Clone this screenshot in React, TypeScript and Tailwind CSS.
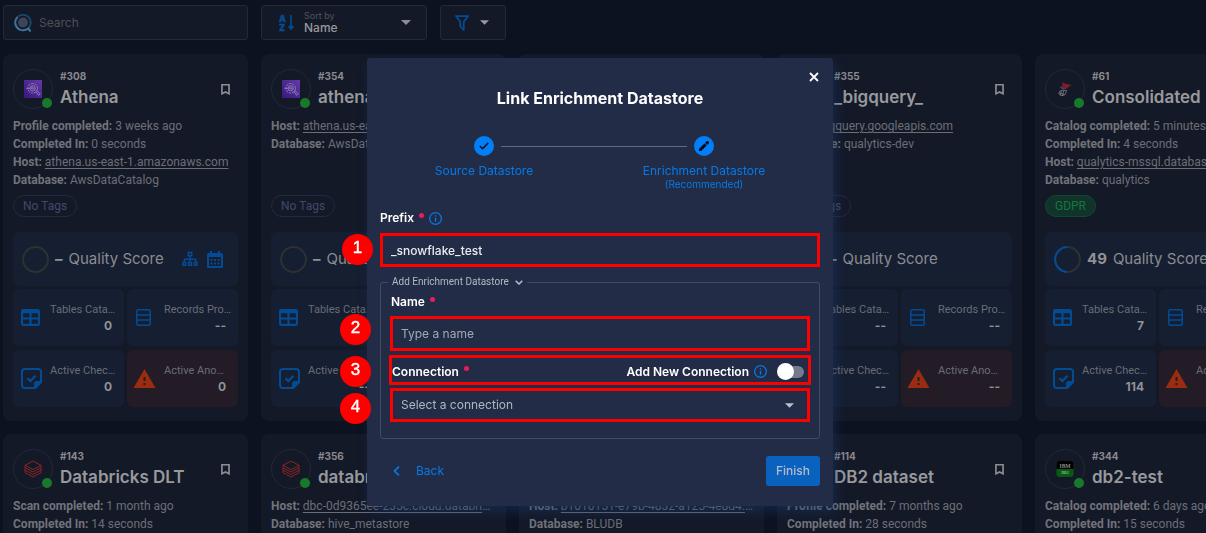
import type { ReactNode } from "react";

type Kind = "athena" | "databricks" | "mssql" | "db2" | "bigquery";

type Store = {
  id: number;
  name: string;
  kind: Kind;
  lines: { label: string; value: string; link?: boolean }[];
  tag?: string;
  score?: number;
  actions?: boolean;
  tables?: string;
  checks?: string;
  anomalies?: string;
};

const stores: Store[] = [
  {
    id: 308,
    name: "Athena",
    kind: "athena",
    lines: [
      { label: "Profile completed:", value: "3 weeks ago" },
      { label: "Completed In:", value: "0 seconds" },
      { label: "Host:", value: "athena.us-east-1.amazonaws.com", link: true },
      { label: "Database:", value: "AwsDataCatalog" },
    ],
    actions: true,
    tables: "0",
    checks: "0",
    anomalies: "0",
  },
  {
    id: 354,
    name: "athena",
    kind: "athena",
    lines: [
      { label: "Host:", value: "athena.us-east-1.amazonaws.com", link: true },
      { label: "Database:", value: "AwsDataCatalog" },
    ],
  },
  {
    id: 355,
    name: "bigquery",
    kind: "bigquery",
    lines: [{ label: "Database:", value: "qualytics" }],
  },
  {
    id: 355,
    name: "_bigquery_",
    kind: "bigquery",
    lines: [
      { label: "Host:", value: "bigquery.googleapis.com", link: true },
      { label: "Database:", value: "qualytics-dev" },
    ],
  },
  {
    id: 61,
    name: "Consolidated",
    kind: "mssql",
    lines: [
      { label: "Catalog completed:", value: "5 minutes ago" },
      { label: "Completed In:", value: "4 seconds" },
      { label: "Host:", value: "qualytics-mssql.database.windows.net", link: true },
      { label: "Database:", value: "qualytics" },
    ],
    tag: "GDPR",
    score: 49,
    tables: "7",
    checks: "114",
  },
  {
    id: 143,
    name: "Databricks DLT",
    kind: "databricks",
    lines: [
      { label: "Scan completed:", value: "1 month ago" },
      { label: "Completed In:", value: "14 seconds" },
    ],
  },
  {
    id: 356,
    name: "databricks",
    kind: "databricks",
    lines: [
      { label: "Host:", value: "dbc-0d9365ee-235c.cloud.databricks.com", link: true },
      { label: "Database:", value: "hive_metastore" },
    ],
  },
  {
    id: 113,
    name: "DB2",
    kind: "db2",
    lines: [
      { label: "Host:", value: "b1010151-e79b-4832-a125-4e8d4.databases.cloud", link: true },
      { label: "Database:", value: "BLUDB" },
    ],
  },
  {
    id: 114,
    name: "DB2 dataset",
    kind: "db2",
    lines: [
      { label: "Profile completed:", value: "7 months ago" },
      { label: "Completed In:", value: "28 seconds" },
    ],
  },
  {
    id: 344,
    name: "db2-test",
    kind: "db2",
    lines: [
      { label: "Catalog completed:", value: "6 days ago" },
      { label: "Completed In:", value: "15 seconds" },
    ],
  },
];

function Caret({ className }: { className: string }) {
  return (
    <svg viewBox="7 10 10 5" className={className} fill="currentColor" aria-hidden="true">
      <path d="M7 10l5 5 5-5z" />
    </svg>
  );
}

function InfoIcon() {
  return (
    <svg viewBox="2 2 20 20" className="size-[13px] shrink-0 text-[#067ae6]" fill="currentColor" aria-hidden="true">
      <path d="M11,9H13V7H11M12,20C7.59,20 4,16.41 4,12C4,7.59 7.59,4 12,4C16.41,4 20,7.59 20,12C20,16.41 16.41,20 12,20M12,2A10,10 0 0,0 2,12A10,10 0 0,0 12,22A10,10 0 0,0 22,12A10,10 0 0,0 12,2M11,17H13V11H11V17Z" />
    </svg>
  );
}

function KindLogo({ kind }: { kind: Kind }) {
  if (kind === "athena") {
    return (
      <svg viewBox="0 0 18 18" className="size-[18px]" fill="none" aria-hidden="true">
        <defs>
          <linearGradient id="violet" x1="0" y1="18" x2="18" y2="0" gradientUnits="userSpaceOnUse">
            <stop stopColor="#35197a" />
            <stop offset="1" stopColor="#643aa6" />
          </linearGradient>
        </defs>
        <path fill="url(#violet)" d="M0 0h18v18H0z" />
        <g stroke="#9e8bc4" strokeWidth=".8">
          <circle cx="8.7" cy="8.3" r="4.8" strokeDasharray="2.6 .8" />
          <circle cx="8.7" cy="8.3" r="2.6" />
          <path d="M2.3 8.3h4M7.5 8.8V7.4M8.8 9.4V6.8M10 9.4V7.8M12 11.7l1-1 3 3-1.3 1.6z" />
        </g>
      </svg>
    );
  }
  if (kind === "databricks") {
    return (
      <svg viewBox="0 0 18 18" className="size-[18px]" fill="none" stroke="#8a2424" strokeWidth="1" aria-hidden="true">
        <path d="M1 5.3 9 1l8 4.3-8 4.3z" />
        <path d="M1 5.3v2.4l8 4.3 8-4.3V5.3" />
        <path d="M1 7.8v2.4l8 4.3 8-4.3V7.8" />
        <path d="M1 10.2v2.4L9 17l8-4.4v-2.4" />
      </svg>
    );
  }
  if (kind === "mssql") {
    return (
      <svg viewBox="0 0 18 18" className="size-[18px]" fill="none" aria-hidden="true">
        <path fill="#7c1f2b" d="M5.500 1.500c1.500 1.400 3.400 2 5.500 2.600 2 .4 3.900 1.200 5 2-1.500-.3-2.700 0-3.500.8-1.200 1.200-2.500 2.300-4.500 2.300C7.500 7.500 6.500 6.500 5 6l2-1z" />
        <path stroke="#7f8087" strokeWidth=".8" d="M3.500 11.500c2-1.500 4.500-1.600 7-1-1 3-1 4.500-3 5C5.500 16 3 15 3 13.500zM3.500 13l5 1.500M5.500 10.500l-1 4.500M8 10.200 6.500 15.500M4.500 7.500 7.500 8.500" />
      </svg>
    );
  }
  if (kind === "db2") {
    return (
      <svg viewBox="0 0 18 18" className="size-[18px]" aria-hidden="true">
        <rect x=".5" y="1" width="17" height="16" rx="3" fill="#065a12" />
        <path d="M3.500 1h11a3 3 0 0 1 3 3v5H.5V4a3 3 0 0 1 3-3z" fill="#000" />
        <text x="9" y="7.500" textAnchor="middle" fontSize="5.500" fontWeight="700" fill="#8b8b8b" fontFamily="Liberation Serif">IBM</text>
        <text x="9" y="14" textAnchor="middle" fontSize="4" fontWeight="700" fill="#8fb393" fontFamily="Liberation Serif">DB2</text>
      </svg>
    );
  }
  return (
    <svg viewBox="0 0 18 18" className="size-[18px]" aria-hidden="true">
      <path d="M5 1h8l4 8-4 8H5L1 9z" fill="#27508f" />
    </svg>
  );
}

function Stat({ label, value, icon, alert }: { label: string; value: string; icon: ReactNode; alert?: boolean }) {
  return (
    <div className={`flex h-[57px] min-w-0 items-center rounded-md pr-3 pl-2 ${alert ? "bg-[#231b26]" : "bg-[#161e31]"}`}>
      <div className="flex w-6 shrink-0 justify-start text-[#034c94]">{icon}</div>
      <div className="flex min-w-0 flex-1 flex-col pl-[5px]">
        <span className="font-['Roboto',sans-serif] text-[11px] leading-4 whitespace-nowrap text-[#6a6c75]">{label}</span>
        <span className="text-right text-[12px] leading-4 font-bold text-[#909195]">{value}</span>
      </div>
    </div>
  );
}

function StoreCard({ store }: { store: Store }) {
  return (
    <article className="flex h-[367px] min-w-0 flex-col rounded-lg bg-[#141928] px-[10px] pt-[15px]">
      <div className="flex h-10 items-center gap-[7px]">
        <div className="relative flex size-10 shrink-0 items-center justify-center rounded-full border border-[#232838]">
          <KindLogo kind={store.kind} />
          <span className="absolute right-0 bottom-0 size-[10px] rounded-full bg-[#177a2b]" />
        </div>
        <div className="min-w-0 flex-1 pt-[2px]">
          <p className="text-[10px] leading-[14px] font-bold text-[#898a8e]">#{store.id}</p>
          <h2 className="truncate text-[17px] leading-7 font-semibold text-[#98999c]">{store.name}</h2>
        </div>
        <button type="button" aria-label="Bookmark" className="mr-2 text-[#8c8d92]">
          <svg viewBox="5 3 14 18" className="h-[11px] w-[9px]" fill="none" stroke="currentColor" strokeWidth="2.600" preserveAspectRatio="none">
            <path d="M6.500 4.300h11v14.700L12 16l-5.500 3z" />
          </svg>
        </button>
      </div>
      <div className="mt-2 flex h-[72px] flex-col font-['Roboto',sans-serif] text-[12px] leading-[18px] text-[#6c6e76]">
        {store.lines.map((l) => (
          <p key={l.label} className="truncate">
            <b className="font-bold text-[#71737a]">{l.label}</b>{" "}
            {l.link ? (
              <a href="#host" className="underline underline-offset-2">
                {l.value}
              </a>
            ) : (
              l.value
            )}
          </p>
        ))}
      </div>
      <div className="mt-[6px] flex">
        <span
          className={`flex h-[22px] items-center rounded-full border px-[9px] font-['Roboto',sans-serif] text-[12px] ${
            store.tag ? "border-[#0f4a2b] bg-[#12332b] text-[#107a37]" : "border-[#232a3d] text-[#3f4a6b]"
          }`}
        >
          {store.tag ?? "No Tags"}
        </span>
      </div>
      <div className="mt-[15px] flex h-[54px] items-center rounded-md bg-[#161e31] pr-[15px] pl-[9px]">
        <svg viewBox="0 0 27 27" className="size-[27px] shrink-0 -rotate-90" fill="none" strokeWidth="2" aria-hidden="true">
          <circle cx="13.500" cy="13.500" r="12.400" stroke="#2e3032" />
          {store.score ? (
            <circle cx="13.500" cy="13.500" r="12.400" stroke="#034c94" pathLength="100" strokeDasharray={`${store.score} 100`} transform="translate(0 27) scale(1 -1)" />
          ) : null}
        </svg>
        <span className="ml-[6px] text-[15px] font-bold text-[#909195]">{store.score ?? "–"}</span>
        <span className="ml-[6px] text-[15px] whitespace-nowrap text-[#8b8c90]">Quality Score</span>
        {store.actions ? (
          <div className="ml-auto flex items-center gap-[9px] text-[#034c94]">
            <svg viewBox="0 0 16 16" className="size-4" fill="none" stroke="currentColor" strokeWidth="1.500" aria-hidden="true">
              <path d="M6.300 1.500h3.400v3.200H6.300zM1 11.500h2.800v2.700H1zM6.600 11.500h2.800v2.700H6.600zM12.200 11.500H15v2.700h-2.800zM8 4.700v6.800M2.400 11.500V8.300h11.200v3.200" />
            </svg>
            <svg viewBox="0 0 16 17" className="h-[17px] w-4" aria-hidden="true">
              <path d="M3 0h2v2h6V0h2v2h1.500A1.500 1.500 0 0 1 16 3.500v12a1.500 1.500 0 0 1-1.500 1.500h-13A1.500 1.500 0 0 1 0 15.500v-12A1.500 1.500 0 0 1 1.500 2H3zM2 6v9h12V6z" fill="currentColor" fillRule="evenodd" />
              <path d="M3.500 8h2v2h-2zM7 8h2v2H7zM10.500 8h2v2h-2zM3.500 11.500h2v2h-2zM7 11.500h2v2H7zM10.500 11.500h2v2h-2z" fill="currentColor" />
            </svg>
          </div>
        ) : null}
      </div>
      <div className="mt-[3px] grid grid-cols-2 gap-x-[3px] gap-y-1">
        <Stat
          label="Tables Cata…"
          value={store.tables ?? "--"}
          icon={
            <svg viewBox="3 4 18 16" className="h-[17px] w-[19px]" fill="currentColor">
              <path d="M5,4H19A2,2 0 0,1 21,6V18A2,2 0 0,1 19,20H5A2,2 0 0,1 3,18V6A2,2 0 0,1 5,4M5,8V12H11V8H5M13,8V12H19V8H13M5,14V18H11V14H5M13,14V18H19V14H13Z" />
            </svg>
          }
        />
        <Stat
          label="Records Pro…"
          value="--"
          icon={
            <svg viewBox="0 0 15 17" className="ml-px h-[17px] w-[15px]" fill="none" stroke="currentColor" strokeWidth="1.500">
              <rect x=".8" y=".8" width="13.400" height="15.400" rx="1.500" />
              <path d="M1 6h13M1 11h13" />
            </svg>
          }
        />
        <Stat
          label="Active Chec…"
          value={store.checks ?? "--"}
          icon={
            <svg viewBox="0 0 21 21" className="size-[21px]" fill="none" stroke="currentColor" strokeWidth="2">
              <path d="M20 14V4a3 3 0 0 0-3-3H4a3 3 0 0 0-3 3v13a3 3 0 0 0 3 3h10z" />
              <path d="M14 20v-4a2 2 0 0 1 2-2h4z" fill="currentColor" />
              <path d="m6.500 10.300 2.800 2.800 5.200-5.400" strokeWidth="2.200" />
            </svg>
          }
        />
        <Stat
          alert
          label="Active Ano…"
          value={store.anomalies ?? "--"}
          icon={
            <svg viewBox="1 2 22 19" className="-ml-[2px] h-[19px] w-[23px] text-[#9a2c10]" fill="currentColor">
              <path d="M13,14H11V10H13M13,18H11V16H13M1,21H23L12,2L1,21Z" />
            </svg>
          }
        />
      </div>
    </article>
  );
}

function Badge({ n, className }: { n: number; className: string }) {
  return (
    <span
      className={`absolute flex size-[31px] items-center justify-center rounded-full bg-[#fe0000] pb-1 font-['Liberation_Sans',sans-serif] text-[17px] leading-none text-white [-webkit-text-stroke:0.4px_white] ${className}`}
    >
      {n}
    </span>
  );
}

function Required() {
  return <span className="mb-[6px] size-[5px] rounded-full bg-[#ec1b5d]" />;
}

function EnrichmentDialog() {
  return (
    <div className="fixed inset-0 flex items-start justify-center pt-[58px] pr-[6px]">
      <form
        role="dialog"
        aria-labelledby="dialog-title"
        className="relative flex w-[466px] flex-col rounded-[3px] bg-[#232c46] px-[13px] pb-5 shadow-[3px_6px_12px_rgba(24,60,110,0.45)]"
      >
        <button type="button" aria-label="Close" className="absolute top-[14px] right-[14px] text-white">
          <svg viewBox="0 0 10 10" className="size-[10px]" fill="none" stroke="currentColor" strokeWidth="1.800">
            <path d="M1 1l8 8M9 1 1 9" />
          </svg>
        </button>
        <h1 id="dialog-title" className="mt-7 text-center text-[16px] leading-6 font-bold text-white">
          Link Enrichment Datastore
        </h1>
        <ol className="mt-[26px] flex w-[328px] self-center text-[12px] leading-[14px] whitespace-nowrap text-[#067ae6]">
          <li className="flex w-24 flex-col items-center">
            <span className="mb-2 flex size-5 items-center justify-center rounded-full bg-[#017ff8]">
              <svg viewBox="0 0 10 8" className="h-2 w-[10px]" fill="none" stroke="#0a1020" strokeWidth="1.500">
                <path d="m.8 4 2.700 2.700L9.300.9" />
              </svg>
            </span>
            Source Datastore
          </li>
          <li aria-hidden="true" className="mt-[10px] -mr-[43px] -ml-[31px] h-px flex-1 bg-[#626a7e]" />
          <li className="flex w-[120px] flex-col items-center">
            <span className="mb-2 flex size-5 items-center justify-center rounded-full bg-[#017ff8]">
              <svg viewBox="3 3 18 18" className="size-[10px]" fill="#050a14">
                <path d="M3 17.200V21h3.800L16.600 11.200 12.800 7.400zM17.700 10.100 13.900 6.300 16.900 3.300a1.500 1.500 0 0 1 2.100 0l1.700 1.700a1.500 1.500 0 0 1 0 2.100z" />
              </svg>
            </span>
            Enrichment Datastore
            <span className="text-[10px] leading-3">(Recommended)</span>
          </li>
        </ol>

        <div className="mt-[18px] flex h-5 items-center gap-[5px]">
          <label htmlFor="prefix" className="text-[12px] font-semibold text-white">
            Prefix
          </label>
          <Required />
          <InfoIcon />
        </div>
        <div className="relative mt-[5px] flex">
          <input
            id="prefix"
            defaultValue="_snowflake_test"
            className="h-[34px] w-full border-[3px] border-[#fe0000] bg-transparent px-2 text-[12px] font-medium text-[#e9ebef] outline-none"
          />
          <Badge n={1} className="top-[1px] -left-[38px]" />
        </div>

        <fieldset className="mt-[7px] rounded-[3px] border border-[#434b61] px-[9px] pb-4">
          <legend className="-ml-[2px] px-1 font-['Roboto',sans-serif] text-[10px] leading-4 text-[#b4b8c2]">
            <button type="button" className="flex items-center gap-[6px]">
              Add Enrichment Datastore
              <svg viewBox="0 0 8 5" className="h-[5px] w-2" fill="none" stroke="currentColor" strokeWidth="1.600">
                <path d="m.7.700 3.300 3.300L7.300.7" />
              </svg>
            </button>
          </legend>
          <div className="mt-[2px] flex h-5 items-center gap-[5px] pl-px">
            <label htmlFor="name" className="text-[12px] font-semibold text-white">
              Name
            </label>
            <Required />
          </div>
          <div className="relative mt-1 flex">
            <input
              id="name"
              placeholder="Type a name"
              className="h-[35px] w-full border-[3px] border-[#fe0000] bg-transparent px-2 text-[12px] text-[#e9ebef] outline-none placeholder:text-[#a4a8b3]"
            />
            <Badge n={2} className="-top-[2px] -left-[50px]" />
          </div>
          <div className="relative -mx-px mt-1 flex h-[30px] items-center gap-[5px] border-[3px] border-[#fe0000] pt-[3px] pr-[3px]">
            <label htmlFor="connection" className="text-[12px] font-semibold text-white">
              Connection
            </label>
            <Required />
            <label htmlFor="new-connection" className="ml-auto text-[12px] font-semibold text-white">
              Add New Connection
            </label>
            <InfoIcon />
            <input
              id="new-connection"
              type="checkbox"
              role="switch"
              className="relative mr-px ml-[6px] h-3 w-[26px] appearance-none rounded-full bg-[#747b8b] before:absolute before:-top-[3px] before:-left-px before:size-[17px] before:rounded-full before:bg-white"
            />
            <Badge n={3} className="-top-[2px] -left-[52px]" />
          </div>
          <div className="relative mt-[3px] flex items-center">
            <select
              id="connection"
              className="h-[34px] w-full appearance-none border-[3px] border-[#fe0000] bg-transparent px-2 text-[12px] text-[#b2b6bf] outline-none"
            >
              <option>Select a connection</option>
            </select>
            <Caret className="pointer-events-none absolute right-4 h-[5px] w-[9px] text-[#bdc0c9]" />
            <Badge n={4} className="top-[5px] -left-[50px]" />
          </div>
        </fieldset>

        <div className="mt-[17px] flex items-center justify-between">
          <button type="button" className="flex items-center gap-4 pl-[13px] text-[12px] text-[#067ae6]">
            <svg viewBox="0 0 7 10" className="h-[10px] w-[7px]" fill="none" stroke="currentColor" strokeWidth="1.700">
              <path d="M6 .7 1.500 5 6 9.300" />
            </svg>
            Back
          </button>
          <button type="submit" className="h-[30px] rounded-[3px] bg-[#0a62bf] px-[10px] text-[12px] font-medium text-[#b4bccb]">
            Finish
          </button>
        </div>
      </form>
    </div>
  );
}

export default function App() {
  return (
    <div className="h-screen overflow-hidden bg-[#0c1220] px-[3px] pt-[5px] font-['Inter',sans-serif]">
      <div className="flex h-[35px] gap-[13px]">
        <label className="flex w-[245px] items-center gap-[6px] rounded-[3px] border border-[#242936] bg-[#141928] pl-[9px]">
          <svg viewBox="0 0 20 20" className="size-5" fill="none" aria-hidden="true">
            <circle cx="10" cy="9.500" r="5" fill="#3c4658" />
            <circle cx="10" cy="9.500" r="7.700" stroke="#17466a" strokeWidth="2" />
            <path d="M4.500 4.100A7.700 7.700 0 0 0 13 16.600l2.500-1 2 3" stroke="#3f7199" strokeWidth="2" />
          </svg>
          <input aria-label="Search" placeholder="Search" className="min-w-0 flex-1 bg-transparent text-[12px] text-[#898a8e] outline-none placeholder:text-[#4d4f57]" />
        </label>
        <button type="button" className="flex w-[166px] items-center rounded-[3px] border border-[#242936] bg-[#141928] pr-[15px] pl-[17px]">
          <svg viewBox="0 0 16 18" className="h-[18px] w-4 text-[#034c94]" aria-hidden="true">
            <text x="0" y="8" fontSize="9" fontWeight="800" fill="currentColor" stroke="currentColor" strokeWidth=".5" fontFamily="Inter">A</text>
            <text x="0" y="16.500" fontSize="9" fontWeight="800" fill="currentColor" stroke="currentColor" strokeWidth=".5" fontFamily="Inter">Z</text>
            <path d="M12 1v13.500M9.500 12l2.500 3 2.500-3" fill="none" stroke="currentColor" strokeWidth="1.600" />
          </svg>
          <span className="ml-[9px] flex flex-col text-left">
            <span className="text-[9px] leading-[11px] text-[#505259]">Sort by</span>
            <span className="text-[12px] leading-[14px] font-medium text-[#97989b]">Name</span>
          </span>
          <Caret className="ml-auto h-[5px] w-[10px] text-[#8c8d92]" />
        </button>
        <button type="button" aria-label="Filter" className="flex w-[66px] items-center justify-between rounded-[3px] border border-[#242936] bg-[#141928] pr-4 pl-[14px]">
          <svg viewBox="4 3 16 18" className="h-4 w-[14px] text-[#034c94]" fill="currentColor">
            <path d="M15,19.880C15.040,20.180 14.940,20.500 14.710,20.710C14.320,21.100 13.690,21.100 13.300,20.710L9.290,16.700C9.060,16.470 8.960,16.160 9,15.870V10.750L4.210,4.620C3.870,4.190 3.950,3.560 4.380,3.220C4.570,3.080 4.780,3 5,3H19C19.220,3 19.430,3.080 19.620,3.220C20.050,3.560 20.130,4.190 19.790,4.620L15,10.750V19.880M7.040,5L11,10.060V15.580L13,17.580V10.050L16.960,5H7.040Z" />
          </svg>
          <Caret className="h-[5px] w-[9px] text-[#97989b]" />
        </button>
      </div>
      <main className="mt-[14px] grid grid-cols-[repeat(5,245px)] gap-[13px]">
        {stores.map((s, i) => (
          <StoreCard key={i} store={s} />
        ))}
      </main>
      <EnrichmentDialog />
    </div>
  );
}
